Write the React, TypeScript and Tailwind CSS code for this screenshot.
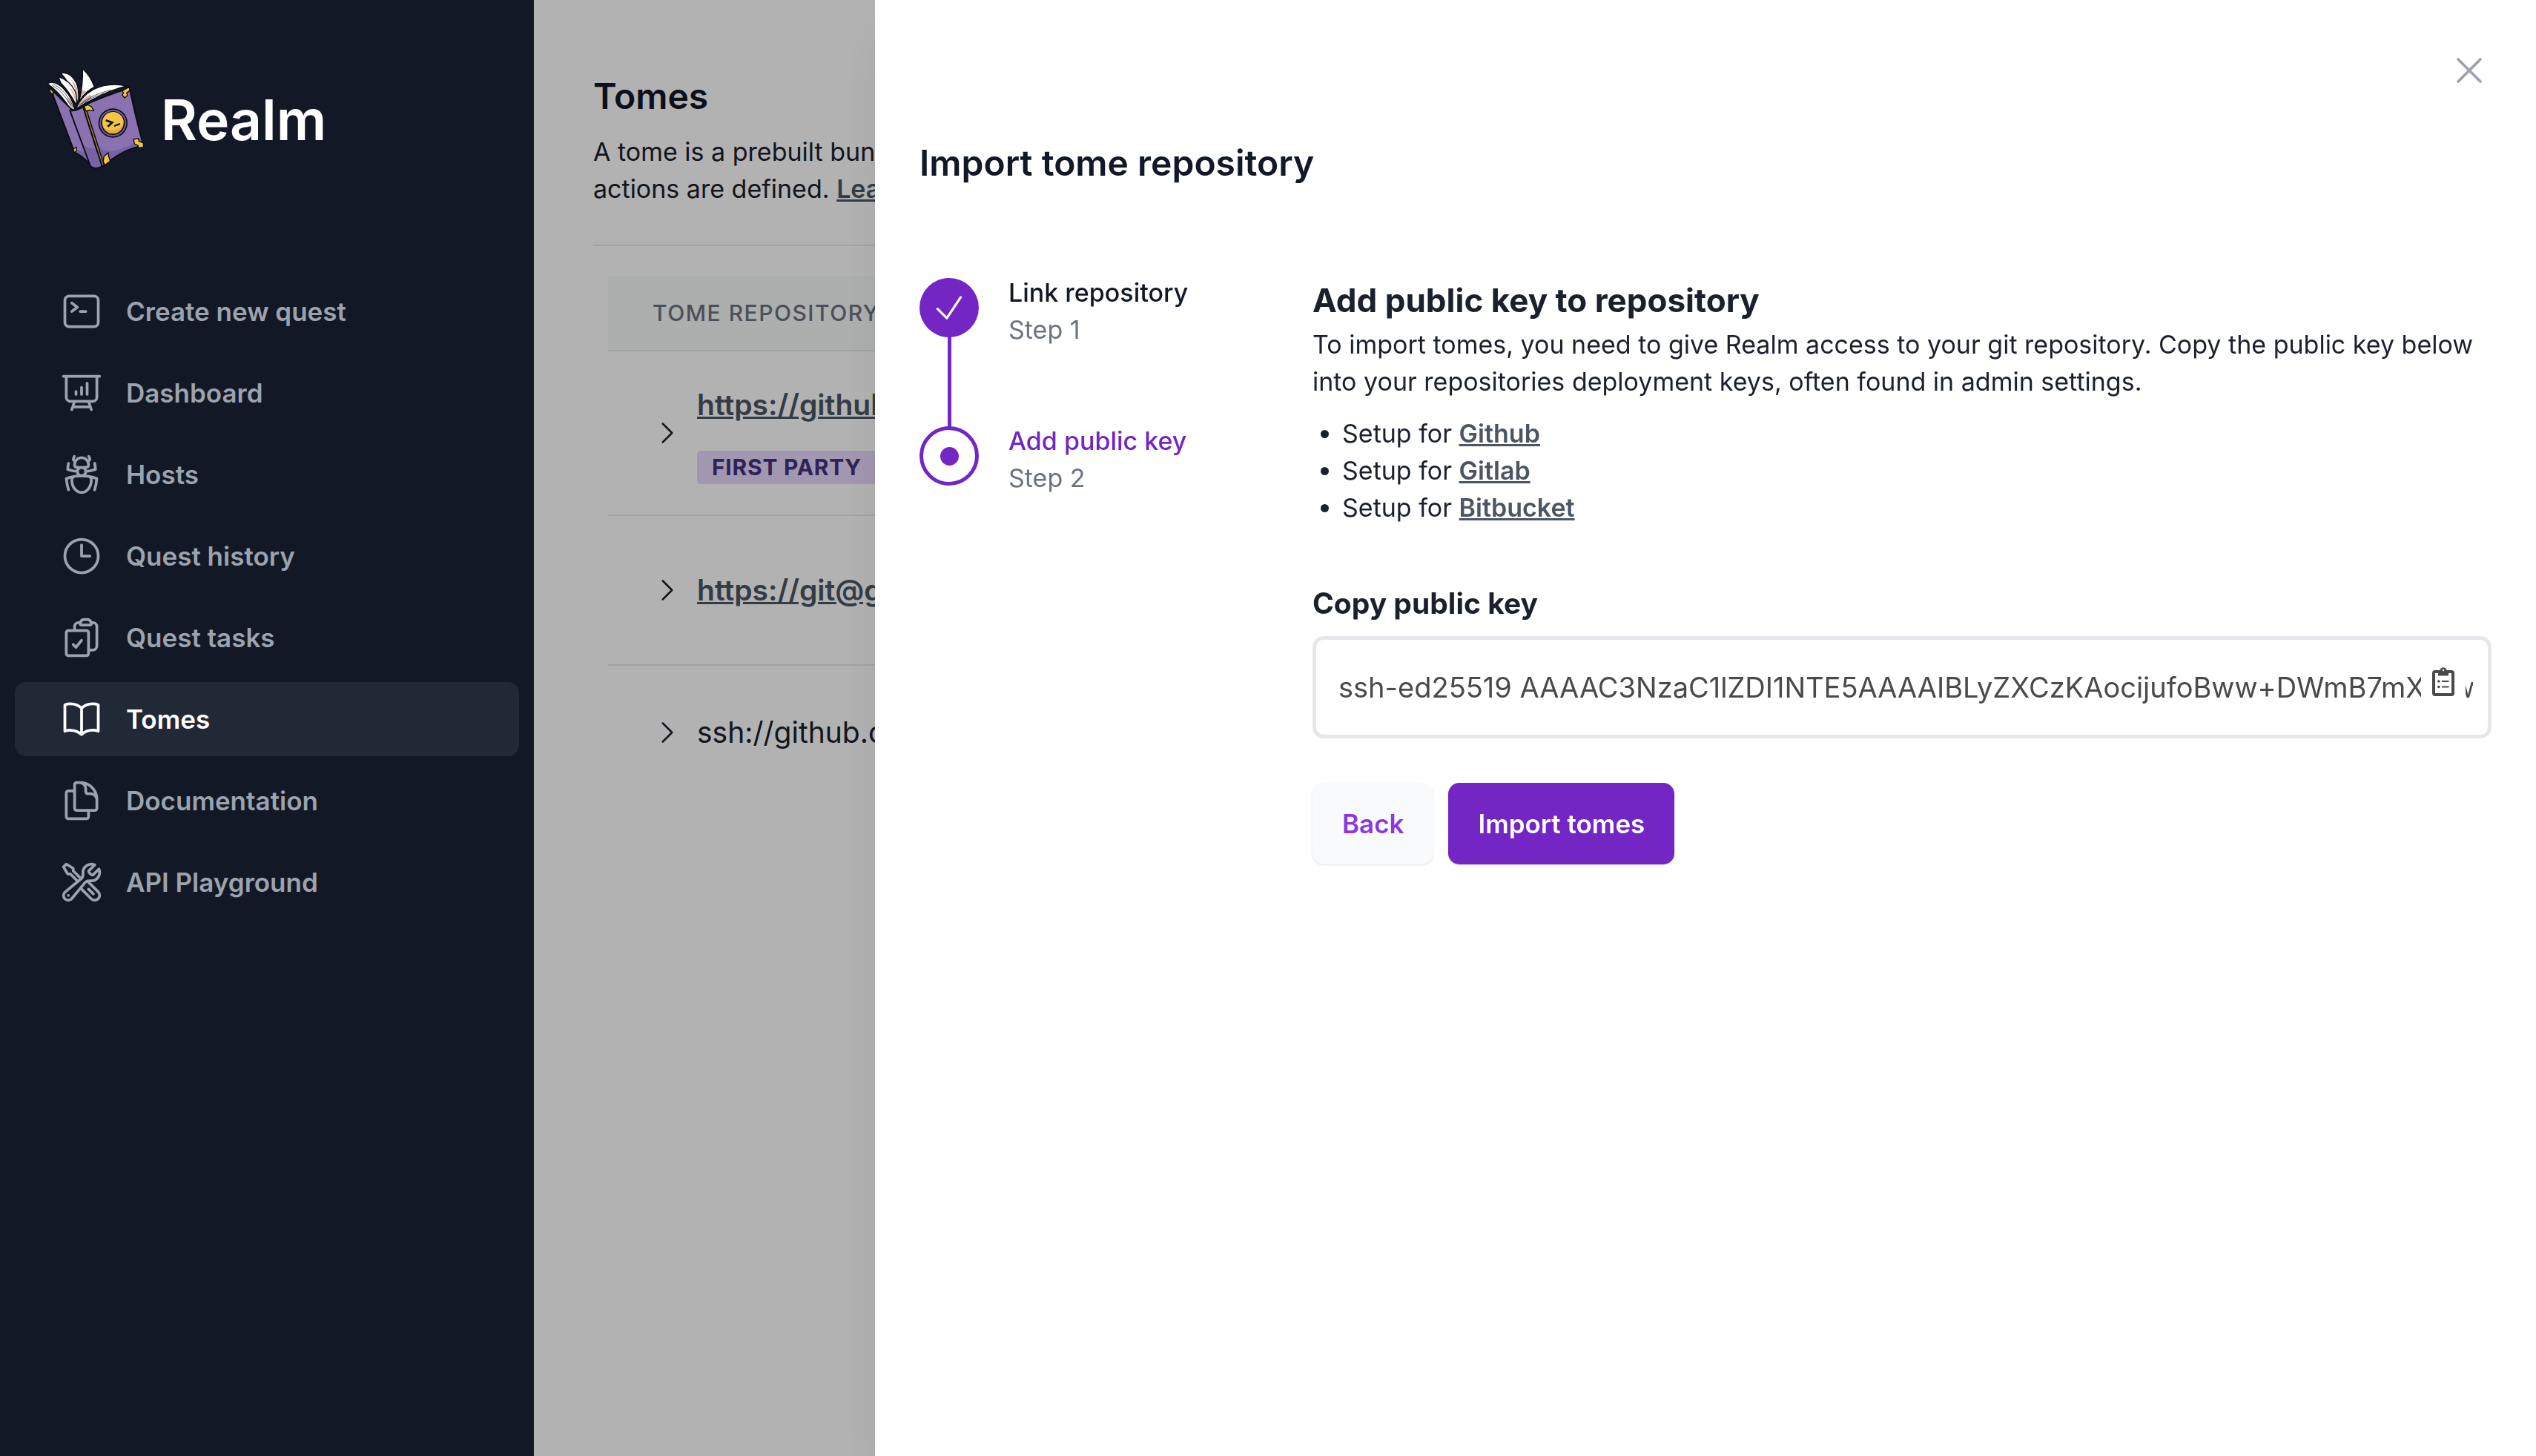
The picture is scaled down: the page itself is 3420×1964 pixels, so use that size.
import { useState } from "react";
import type { ComponentType } from "react";
import {
  HiOutlineBookOpen,
  HiOutlineBugAnt,
  HiOutlineCheck,
  HiOutlineChevronRight,
  HiOutlineClipboardDocumentCheck,
  HiOutlineClock,
  HiOutlineCommandLine,
  HiOutlineDocumentDuplicate,
  HiOutlinePresentationChartBar,
  HiOutlineWrenchScrewdriver,
  HiOutlineXMark,
} from "react-icons/hi2";

type NavItem = {
  label: string;
  icon: ComponentType<{ className?: string }>;
  active?: boolean;
};

const navigation: NavItem[] = [
  { label: "Create new quest", icon: HiOutlineCommandLine },
  { label: "Dashboard", icon: HiOutlinePresentationChartBar },
  { label: "Hosts", icon: HiOutlineBugAnt },
  { label: "Quest history", icon: HiOutlineClock },
  { label: "Quest tasks", icon: HiOutlineClipboardDocumentCheck },
  { label: "Tomes", icon: HiOutlineBookOpen, active: true },
  { label: "Documentation", icon: HiOutlineDocumentDuplicate },
  { label: "API Playground", icon: HiOutlineWrenchScrewdriver },
];

const PUBLIC_KEY =
  "ssh-ed25519 AAAAC3NzaC1lZDI1NTE5AAAAIBLyZXCzKAocijufoBww+DWmB7mXOzw";

function BookLogo() {
  return (
    <svg viewBox="60 60 411 420" className="h-35 w-[137px]" aria-hidden="true">
      <g stroke="#0b0c14" strokeWidth="6" strokeLinejoin="round" strokeLinecap="round">
        {/* back cover */}
        <path d="M84 148 L165 228 L246 458 Q212 418 180 402 Z" fill="#8a72b0" />
        <path d="M180 392 Q205 400 226 408 L240 446 Q212 418 182 403 Z" fill="#7862a6" stroke="none" />
        {/* spine */}
        <path d="M163 238 Q190 240 216 222 L292 462 Q264 478 246 462 Z" fill="#8a72b0" />
        <path d="M221 380 Q246 394 268 392 L290 461 Q264 474 248 460 Z" fill="#7862a6" stroke="none" />
        {/* front cover */}
        <path d="M216 218 Q300 180 404 146 Q430 270 460 378 Q370 396 298 462 Z" fill="#8a72b0" />
        <path d="M272 376 Q300 410 350 398 Q410 384 448 348 L456 376 Q370 394 300 458 Z" fill="#7862a6" stroke="none" />
        <path d="M222 226 L296 458" stroke="#0b0c14" strokeWidth="14" />
        <path d="M223 228 L296 456" stroke="#b8942f" strokeWidth="3.5" />
      </g>

      {/* metal corners */}
      <g fill="#f0c540" stroke="#0b0c14" strokeWidth="4" strokeLinejoin="round">
        <path d="M374 158 L404 141 L404 158 L392 166 L396 176 L384 186 L374 174 L380 166 Z" />
        <path d="M220 220 L236 214 L250 222 L260 238 L240 236 L228 240 Z" />
        <path d="M420 354 L440 350 L442 362 L460 368 L460 386 L440 388 L438 378 L424 372 Z" />
        <path d="M300 424 L318 408 L320 424 L326 442 L304 458 L298 444 Z" />
        <path d="M78 144 L94 158 L96 174 L84 164 Z" />
        <path d="M177 392 L190 386 L190 400 L180 408 Z" />
      </g>

      {/* medallion */}
      <circle cx="337" cy="288" r="59" fill="#0b0c14" />
      <circle cx="337" cy="288" r="54" fill="#6f5a9a" />
      <circle cx="337" cy="288" r="48" fill="#0b0c14" />
      <circle cx="337" cy="288" r="43" fill="#e9a83a" />
      <path d="M294 288 A43 43 0 0 1 380 284 Q372 312 340 316 Q312 318 300 306 Z" fill="#f2c744" />
      <path d="M308 277 L334 286 L316 302" fill="none" stroke="#0b0c14" strokeWidth="8" strokeLinejoin="miter" />
      <path d="M342 300 L366 291" stroke="#0b0c14" strokeWidth="7" />

      {/* pages */}
      <g stroke="#0b0c14" strokeWidth="4" strokeLinejoin="round">
        <path d="M126 86 Q164 78 188 124 Q204 160 192 204 Q182 150 126 86 Z" fill="#ffffff" />
        <path d="M168 112 Q204 146 194 200 Q186 150 168 112 Z" fill="#d8b6ae" stroke="none" />
        <path d="M116 100 Q164 116 184 160 Q194 188 188 214 Q160 160 126 126 Z" fill="#ffffff" />
        <path d="M160 140 Q190 170 188 208 Q176 170 160 140 Z" fill="#d8b6ae" stroke="none" />
        <path d="M214 68 Q246 96 262 142 Q226 160 202 196 Q216 130 214 68 Z" fill="#ffffff" />
        <path d="M213 154 Q232 158 230 160 Q212 176 204 192 Z" fill="#d8b6ae" stroke="none" />
        <path d="M72 128 Q106 114 140 152 Q176 190 182 236 Q164 232 148 206 Q116 160 72 128 Z" fill="#ffffff" />
        <path d="M146 186 Q170 190 180 232 Q166 228 146 186 Z" fill="#d8b6ae" stroke="none" />
        <path d="M188 230 Q206 182 258 152 Q320 122 392 138 Q330 154 272 184 Q226 204 188 230 Z" fill="#ffffff" />
        <path d="M192 224 Q212 186 246 172 L252 190 Q222 202 192 224 Z" fill="#d8b6ae" stroke="none" />
        <path d="M96 130 Q150 160 176 222" fill="none" strokeWidth="2" />
        <path d="M90 134 Q140 166 168 220" fill="none" strokeWidth="2" />
        <path d="M198 218 Q240 176 328 154" fill="none" strokeWidth="2" />
        <path d="M206 212 Q250 184 300 168" fill="none" strokeWidth="2" />
      </g>
    </svg>
  );
}

function ClipboardIcon() {
  return (
    <svg viewBox="0 0 30 40" className="h-10 w-[30px]" aria-hidden="true">
      <rect x="2" y="7" width="26" height="31" rx="2" fill="none" stroke="#4a4a4a" strokeWidth="4" />
      <path d="M8 12.500V5H10.500A4.600 4.600 0 0 1 19.500 5H22V12.500Z" fill="#4a4a4a" />
      <circle cx="15" cy="5" r="1.300" fill="#ffffff" />
      <circle cx="8.800" cy="20" r="1.800" fill="#4a4a4a" />
      <circle cx="8.800" cy="27.500" r="1.800" fill="#4a4a4a" />
      <path d="M13 20H22.500M13 27.500H22.500" stroke="#4a4a4a" strokeWidth="2.200" />
    </svg>
  );
}

function Sidebar() {
  return (
    <aside className="relative z-20 w-180 shrink-0 bg-[#121826]">
      <div className="flex h-80 items-center gap-5 px-15">
        <BookLogo />
        <span className="pt-1 text-[75px] leading-20 font-semibold text-white">Realm</span>
      </div>
      <nav className="mt-[50px] flex flex-col gap-[10px] px-5">
        {navigation.map(({ label, icon: Icon, active }) => (
          <a
            key={label}
            href="#"
            aria-current={active ? "page" : undefined}
            className={
              active
                ? "flex items-center gap-[30px] rounded-[15px] bg-[#222936] px-15 py-5 text-[35px] leading-15 font-semibold text-white"
                : "flex items-center gap-[30px] rounded-[15px] px-15 py-5 text-[35px] leading-15 font-semibold text-[#9ca3af]"
            }
          >
            <Icon className="size-15" />
            {label}
          </a>
        ))}
      </nav>
    </aside>
  );
}

function ExpandButton() {
  return (
    <button type="button" aria-label="Expand tomes" className="shrink-0">
      <HiOutlineChevronRight className="size-10" />
    </button>
  );
}

function TomesPage() {
  const link = "font-semibold text-[#4b5563] underline";
  return (
    <main className="min-w-0 flex-1 overflow-hidden px-20 pt-[100px] text-[#1a202c]">
      <h1 className="text-[48px] leading-15 font-semibold text-[#111827]">Tomes</h1>
      <p className="mt-5 border-b-2 border-gray-200 pb-[50px] text-[34px] leading-[50px] whitespace-nowrap">
        A tome is a prebuilt bundle
        <br />
        actions are defined.{" "}
        <a href="#" className={link}>
          Learn
        </a>
      </p>
      <div className="mt-10 px-5">
        <table className="w-full border-separate border-spacing-0 text-left text-[39px] leading-15 whitespace-nowrap">
          <thead>
            <tr className="h-[102px] bg-[#f8faf9]">
              <th
                scope="col"
                className="border-b-2 border-gray-200 px-15 text-[30px] leading-10 font-medium tracking-wider text-[#6b7280] uppercase"
              >
                Tome repository
              </th>
            </tr>
          </thead>
          <tbody>
            <tr className="h-[222px]">
              <td className="border-b-2 border-gray-200 px-15">
                <div className="flex items-center gap-5">
                  <ExpandButton />
                  <div className="flex flex-col items-start gap-8">
                    <a href="#" className={link}>
                      https://github.com/spellshift/realm
                    </a>
                    <span className="rounded-[5px] bg-[#e9d8fd] px-5 text-[30px] leading-[45px] font-bold tracking-wide text-[#44337a] uppercase">
                      First Party
                    </span>
                  </div>
                </div>
              </td>
            </tr>
            <tr className="h-[202px]">
              <td className="border-b-2 border-gray-200 px-15">
                <div className="flex items-center gap-5">
                  <ExpandButton />
                  <a href="#" className={link}>
                    https://git@github.com/realm/tomes
                  </a>
                </div>
              </td>
            </tr>
            <tr className="h-[180px]">
              <td className="px-15">
                <div className="flex items-center gap-5">
                  <ExpandButton />
                  <span>ssh://github.com/realm/tomes</span>
                </div>
              </td>
            </tr>
          </tbody>
        </table>
      </div>
    </main>
  );
}

function Steps() {
  return (
    <ol className="text-[34px] leading-[50px]">
      <li className="relative flex gap-10 pb-[100px]">
        <span className="absolute top-10 -bottom-2 left-[38px] w-[5px] bg-[#7326c4]" />
        <span className="relative mt-[5px] flex size-20 shrink-0 items-center justify-center rounded-full bg-[#7326c4] text-white">
          <HiOutlineCheck className="size-[50px]" />
        </span>
        <div>
          <p className="font-medium text-[#111827]">Link repository</p>
          <p className="text-[#6b7280]">Step 1</p>
        </div>
      </li>
      <li className="relative flex gap-10" aria-current="step">
        <span className="relative mt-[5px] flex size-20 shrink-0 items-center justify-center rounded-full border-5 border-[#7326c4] bg-white">
          <span className="size-[25px] rounded-full bg-[#7326c4]" />
        </span>
        <div>
          <p className="font-medium text-[#7326c4]">Add public key</p>
          <p className="text-[#6b7280]">Step 2</p>
        </div>
      </li>
    </ol>
  );
}

function ImportDrawer() {
  const [publicKey, setPublicKey] = useState(PUBLIC_KEY);
  return (
    <section
      role="dialog"
      aria-labelledby="drawer-title"
      className="fixed inset-y-0 right-0 z-30 w-full max-w-[2240px] bg-white px-15 pt-[65px] text-[#1a202c] shadow-[0_40px_60px_-10px_rgba(0,0,0,0.1)]"
    >
      <div className="flex justify-end">
        <button type="button" aria-label="Close panel" className="text-[#9ca3af]">
          <HiOutlineXMark className="size-15" />
        </button>
      </div>
      <h2 id="drawer-title" className="mt-[65px] text-[48px] leading-15 font-semibold text-[#111827]">
        Import tome repository
      </h2>
      <div className="mt-30 grid grid-cols-4">
        <Steps />
        <form className="col-span-3" onSubmit={(event) => event.preventDefault()}>
          <h3 className="text-[44px] leading-[70px] font-bold">Add public key to repository</h3>
          <p className="text-[34px] leading-[50px]">
            To import tomes, you need to give Realm access to your git repository. Copy the public key below into
            your repositories deployment keys, often found in admin settings.
          </p>
          <ul className="mt-5 list-disc pl-10 text-[34px] leading-[50px]">
            {["Github", "Gitlab", "Bitbucket"].map((host) => (
              <li key={host}>
                Setup for{" "}
                <a href="#" className="font-semibold text-[#4b5563] underline">
                  {host}
                </a>
              </li>
            ))}
          </ul>
          <label htmlFor="public-key" className="mt-[74px] block text-[39px] leading-15 font-bold">
            Copy public key
          </label>
          <div className="relative mt-[14px]">
            <input
              id="public-key"
              type="text"
              value={publicKey}
              onChange={(event) => setPublicKey(event.target.value)}
              className="h-[138px] w-full rounded-[15px] border-5 border-[#e5e7eb] bg-white pr-5 pl-[30px] text-[38px] leading-15 text-[#4a4a4a]"
            />
            <button
              type="button"
              aria-label="Copy to clipboard"
              className="absolute top-[31px] right-[35px] flex size-15 items-center justify-center bg-white"
            >
              <ClipboardIcon />
            </button>
          </div>
          <div className="mt-15 flex gap-5 text-[35px] leading-[50px] font-semibold">
            <button type="button" className="rounded-[15px] bg-[#f9fafb] px-10 py-[30px] text-[#8a38e0] shadow-sm">
              Back
            </button>
            <button type="submit" className="rounded-[15px] bg-[#7326c4] px-10 py-[30px] text-white shadow-sm">
              Import tomes
            </button>
          </div>
        </form>
      </div>
    </section>
  );
}

export default function App() {
  return (
    <div className="flex min-h-screen bg-white font-['Inter',sans-serif]">
      <Sidebar />
      <TomesPage />
      <div className="fixed inset-0 z-10 bg-black/30" />
      <ImportDrawer />
    </div>
  );
}
